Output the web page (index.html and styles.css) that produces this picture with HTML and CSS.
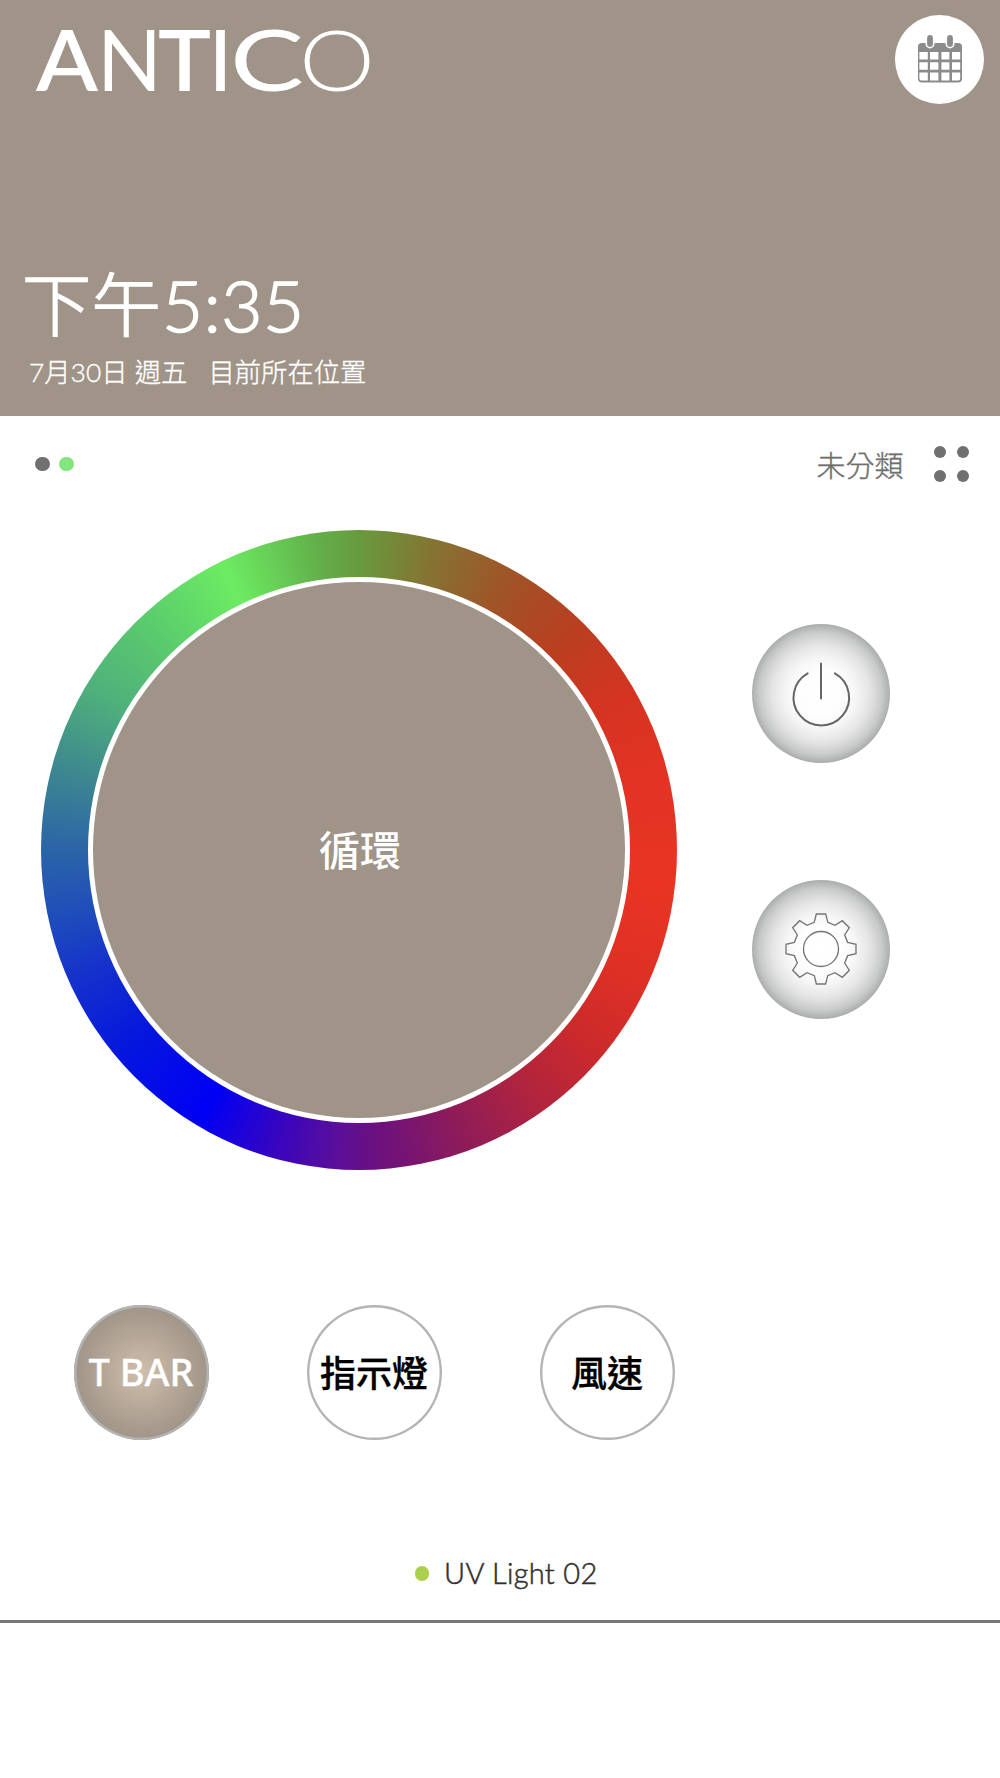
FILE: index.html
```html
<!DOCTYPE html>
<html lang="zh-Hant">
<head>
<meta charset="utf-8">
<title>ANTICO</title>
<link rel="stylesheet" href="styles.css">
</head>
<body>
<header class="hero">
  <div class="hero-top">
    <svg class="logo" width="370" height="120" viewBox="0 0 370 120" role="img" aria-label="ANTICO">
      <text class="logo-text" y="91"><tspan x="14" class="semi" textLength="62" lengthAdjust="spacingAndGlyphs">A</tspan><tspan x="75" textLength="65" lengthAdjust="spacingAndGlyphs">N</tspan><tspan x="136" class="semi" textLength="53" lengthAdjust="spacingAndGlyphs">T</tspan><tspan x="189" class="bold" textLength="19" lengthAdjust="spacingAndGlyphs">I</tspan><tspan x="208" textLength="74" lengthAdjust="spacingAndGlyphs">C</tspan><tspan x="277" class="thin" textLength="76" lengthAdjust="spacingAndGlyphs">O</tspan></text>
    </svg>
    <button class="calendar" aria-label="calendar">
      <svg width="46" height="50" viewBox="0 0 46 50">
        <rect x="1" y="8" width="44" height="39.5" rx="4" fill="#8b8b8b"/>
        <g fill="#fff">
          <path d="M2.4 17h8.4v7.5H2.4zM13 17h8.4v7.5H13zM24.4 17h8v7.5h-8zM35 17h8.2v7.5H35z"/>
          <path d="M2.4 27.2h8.4v7.6H2.4zM13 27.2h8.4v7.6H13zM24.4 27.2h8v7.6h-8zM35 27.2h8.2v7.6H35z"/>
          <path d="M2.4 37.5h8.4v8H5a2.6 2.6 0 0 1-2.6-2.6zM13 37.5h8.4v8H13zM24.4 37.5h8v8h-8zM35 37.5h8.2v5.4a2.6 2.6 0 0 1-2.6 2.6H35z"/>
        </g>
        <g fill="#8b8b8b" stroke="#fff" stroke-width="1.6">
          <rect x="9.3" y="-.8" width="7.4" height="13.4" rx="3.7"/>
          <rect x="29.3" y="-.8" width="7.4" height="13.4" rx="3.7"/>
        </g>
      </svg>
    </button>
  </div>
  <div class="time"><span class="ampm">下午</span><span>5:35</span></div>
  <div class="meta"><span class="date">7月30日 週五</span><span>目前所在位置</span></div>
</header>
<main class="panel">
  <div class="toolbar">
    <div class="pager"><i class="dot"></i><i class="dot active"></i></div>
    <div class="group">
      <span>未分類</span>
      <div class="grid-dots"><i></i><i></i><i></i><i></i></div>
    </div>
  </div>
  <section class="controls">
    <div class="wheel"><div class="wheel-gap"><div class="wheel-core">循環</div></div></div>
    <div class="side">
      <button class="knob" aria-label="power">
        <svg width="80" height="80" viewBox="-40 -40 80 80" fill="none" stroke="#656565" stroke-width="2" stroke-linecap="round">
          <path d="M-13.3 -20.6A27.8 27.8 0 1 0 13.9 -20.6"/>
          <path d="M0 -30.5V4.5"/>
        </svg>
      </button>
      <button class="knob" aria-label="settings">
        <svg width="80" height="80" viewBox="-120 -120 240 240" fill="none" stroke="#757575" stroke-width="4">
          <circle r="52.5"/>
          <path d="M-14 -105H14L20.5 -80L42 -71L64 -85L85 -64L71 -42L80 -20L105 -14V14L80 20L71 42L85 64L64 85L42 71L20 80L14 105H-14L-20 80L-42 71L-64 85L-85 64L-71 42L-80 20L-105 14V-14L-80 -20L-71 -42L-85 -64L-64 -85L-42 -71L-20.5 -80Z"/>
        </svg>
      </button>
    </div>
  </section>
  <nav class="modes">
    <button class="mode selected">T BAR</button>
    <button class="mode">指示燈</button>
    <button class="mode">風速</button>
  </nav>
  <div class="device"><i class="status"></i><span>UV Light 02</span></div>
</main>
</body>
</html>
```

FILE: styles.css
```css
* { box-sizing: border-box; }
body {
  margin: 0;
  width: 1000px;
  height: 1778px;
  background: #fff;
  font-family: Lato, "Noto Sans CJK TC", sans-serif;
}
button {
  border: 0;
  padding: 0;
  font: inherit;
  background: none;
  display: flex;
  align-items: center;
  justify-content: center;
  white-space: nowrap;
}
.hero {
  height: 415.5px;
  background: #a09488;
  color: #fff;
  padding: 0 16px 0 22px;
}
.hero-top {
  display: flex;
  justify-content: space-between;
  align-items: flex-start;
  height: 255px;
}
.logo-text { font: 400 85px Lato, sans-serif; fill: #fff; }
.bold { font-weight: 700; }
.semi { font-weight: 600; }
.thin { font-weight: 300; }
.calendar {
  width: 89px;
  height: 89px;
  margin-top: 15px;
  border-radius: 50%;
  background: #fff;
}
.calendar svg { overflow: visible; }
.time {
  display: flex;
  align-items: center;
  height: 100px;
  font-size: 71px;
  font-weight: 300;
  line-height: 100px;
  letter-spacing: 0.5px;
  white-space: nowrap;
  -webkit-text-stroke: 1.6px #fff;
}
.ampm {
  width: 140px;
  font-size: 69px;
  letter-spacing: 0.8px;
}
.meta {
  display: flex;
  gap: 21px;
  padding-left: 7px;
  height: 36px;
  line-height: 35px;
  font-size: 26.35px;
  font-weight: 300;
  -webkit-text-stroke: 0.35px #fff;
}
.toolbar {
  display: flex;
  justify-content: space-between;
  align-items: center;
  height: 97px;
  padding: 0 31.5px 0 35px;
}
.pager { display: flex; gap: 9.5px; }
.dot { width: 14.6px; height: 14.6px; border-radius: 50%; background: #707070; }
.dot.active { background: #82e57e; }
.group {
  display: flex;
  align-items: center;
  gap: 30px;
  color: #6f6f6f;
  font-size: 29px;
  font-weight: 300;
  -webkit-text-stroke: 0.4px #6f6f6f;
}
.group span { padding-bottom: 1px; }
.grid-dots { display: grid; grid-template-columns: 12px 12px; gap: 12px 11px; }
.grid-dots i { width: 12px; height: 12px; border-radius: 50%; background: #707070; }
.controls {
  display: flex;
  gap: 74.5px;
  padding: 17.5px 0 0 41px;
  height: 792.5px;
}
.wheel {
  width: 636px;
  height: 640px;
  padding: 47px;
  border-radius: 50%;
  background: conic-gradient(#689a3e 0deg, #857332 14deg, #a05328 29deg, #ba3e20 45deg, #d53422 60deg, #e23323 75deg, #e93423 97deg, #de3025 115deg, #cb2a2b 130deg, #b0243e 145deg, #8f1c58 160deg, #6a1080 177deg, #5b0f9a 184deg, #3a05bd 195deg, #0000f5 210.5deg, #0517dd 230deg, #1430cc 245deg, #1f4eba 258deg, #2b64a8 270deg, #3e8a8e 286deg, #4fb07b 301deg, #5acb6d 317deg, #6cec62 334.6deg, #62b04a 352deg, #689a3e 360deg);
}
.wheel-gap {
  width: 100%;
  height: 100%;
  padding: 5px;
  border-radius: 50%;
  background: #fff;
}
.wheel-core {
  display: flex;
  align-items: center;
  justify-content: center;
  height: 100%;
  padding: 0 0 4px 2px;
  border-radius: 50%;
  background: #a09488;
  color: #fff;
  font-size: 41px;
  font-weight: 500;
}
.side { display: flex; flex-direction: column; gap: 116.5px; padding-top: 94px; }
.knob {
  width: 138.5px;
  height: 139px;
  border-radius: 50%;
  background: radial-gradient(circle closest-side, #fff 0%, #fdfdfd 35%, #f5f5f5 52%, #e4e4e4 71%, #c8cac9 89%, #acaead 100%);
}
.modes { display: flex; gap: 98px; padding-left: 73.5px; }
.mode {
  width: 135px;
  height: 135px;
  padding: 0 0 4px;
  box-shadow: inset 0 0 0 2.4px #b3b4b4;
  border-radius: 50%;
  font-family: "Noto Sans CJK TC", sans-serif;
  font-size: 36px;
  font-weight: 500;
  color: #000;
  -webkit-text-stroke: 0.3px;
}
.mode.selected {
  background: radial-gradient(circle closest-side, #cfbeab, #a09488);
  color: #fff;
  font-family: "Noto Sans", sans-serif;
  font-size: 38px;
}
.device {
  display: flex;
  justify-content: center;
  align-items: center;
  gap: 15px;
  height: 182.5px;
  padding: 88px 0 0 12px;
  border-bottom: 3px solid #777;
  font-size: 29px;
  font-weight: 300;
  color: #303030;
  -webkit-text-stroke: 0.5px #303030;
}
.device span { padding-bottom: 2px; letter-spacing: 0.3px; }
.status { width: 14.6px; height: 14.6px; border-radius: 50%; background: #acd04b; }
```
